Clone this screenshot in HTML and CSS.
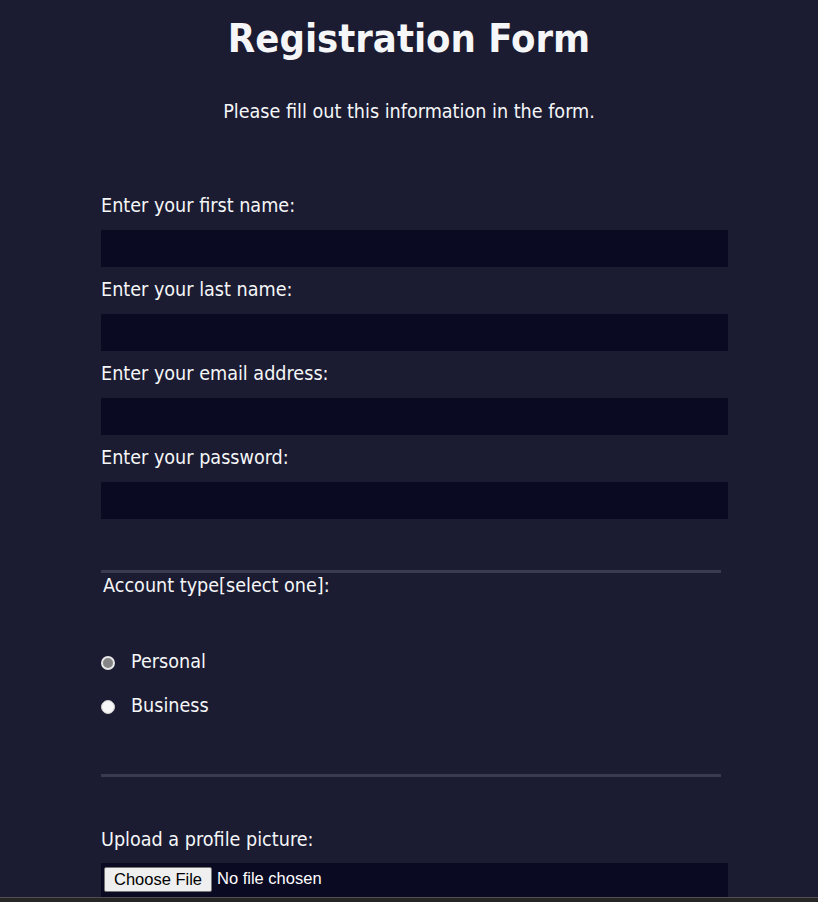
FILE: index.html
```html
<!DOCTYPE html>
<html lang="en">
<head>
<meta charset="utf-8">
<title>Registration Form</title>
<link rel="stylesheet" href="styles.css">
</head>
<body>
  <h1 class="title">Registration Form</h1>
  <p class="intro">Please fill out this information in the form.</p>
  <form class="form">
    <section class="group group-fields">
      <label class="field-label">Enter your first name:</label>
      <input class="text-input" type="text">
      <label class="field-label">Enter your last name:</label>
      <input class="text-input" type="text">
      <label class="field-label">Enter your email address:</label>
      <input class="text-input" type="email">
      <label class="field-label">Enter your password:</label>
      <input class="text-input" type="password">
    </section>
    <section class="group group-account">
      <div class="legend">Account type[select one]:</div>
      <div class="options">
        <label class="radio-row"><span class="radio radio-personal"></span>Personal</label>
        <label class="radio-row"><span class="radio radio-business"></span>Business</label>
      </div>
    </section>
    <section class="group group-upload">
      <label class="field-label">Upload a profile picture:</label>
      <div class="file-input"><span class="file-btn">Choose File</span><span class="file-name">No file chosen</span></div>
    </section>
  </form>
  <div class="window-edge"></div>
</body>
</html>
```

FILE: styles.css
```css
* { box-sizing: border-box; }

html, body {
  margin: 0;
  padding: 0;
}

body {
  background: #1b1b32;
  color: #f5f6f7;
  font-family: "DejaVu Sans Condensed", Tahoma, "DejaVu Sans", sans-serif;
  font-size: 19.6px;
  line-height: 24px;
  height: 902px;
  overflow: hidden;
}

.title {
  margin: 14px 0 0;
  font-size: 39.6px;
  line-height: 48px;
  font-weight: bold;
  text-align: center;
}

.intro {
  margin: 38px 0 0;
  text-align: center;
}

.form {
  width: 620px;
  margin: 0 0 0 101px;
}

.group-fields {
  padding-top: 70px;
  padding-bottom: 51px;
  border-bottom: 3px solid #3b3b4f;
}

.field-label {
  display: block;
  margin: 0 0 12px;
}

.text-input {
  display: block;
  width: 627px;
  height: 37px;
  margin: 0 0 11px;
  background: #0a0a23;
  border: 1px solid #0a0a23;
  color: #fff;
}

.text-input:last-child { margin-bottom: 0; }

.group-account {
  padding-top: 1px;
  padding-bottom: 56px;
  border-bottom: 3px solid #3b3b4f;
}

.legend {
  padding-left: 2px;
}

.options {
  margin-top: 52px;
  display: flex;
  flex-direction: column;
  gap: 20px;
}

.radio-row {
  display: flex;
  align-items: center;
  gap: 16px;
}

.radio {
  width: 14px;
  height: 14px;
  border-radius: 50%;
  flex: none;
  position: relative;
  top: 1px;
}

.radio-personal {
  background: #858585;
  border: 2px solid #e6e6e6;
}

.radio-business {
  background: #f7f7f7;
  border: 1px solid #cfcfcf;
}

.group-upload {
  padding-top: 51px;
}

.file-input {
  width: 627px;
  height: 36px;
  margin-top: -1px;
  background: #0a0a23;
  display: flex;
  align-items: flex-start;
  padding: 4px 3px 0;
  font-family: "Liberation Sans", Arial, sans-serif;
  font-size: 16.5px;
  line-height: 23px;
  color: #fff;
}

.file-btn {
  display: inline-flex;
  align-items: center;
  justify-content: center;
  width: 108px;
  height: 25px;
  background: #efefef;
  color: #000;
  border: 1px solid #767676;
  border-radius: 2px;
  margin-right: 5px;
}

.window-edge {
  position: fixed;
  left: 0;
  right: 0;
  bottom: 0;
  height: 5px;
  background: #262626;
  border-top: 1px solid #505050;
}
```
